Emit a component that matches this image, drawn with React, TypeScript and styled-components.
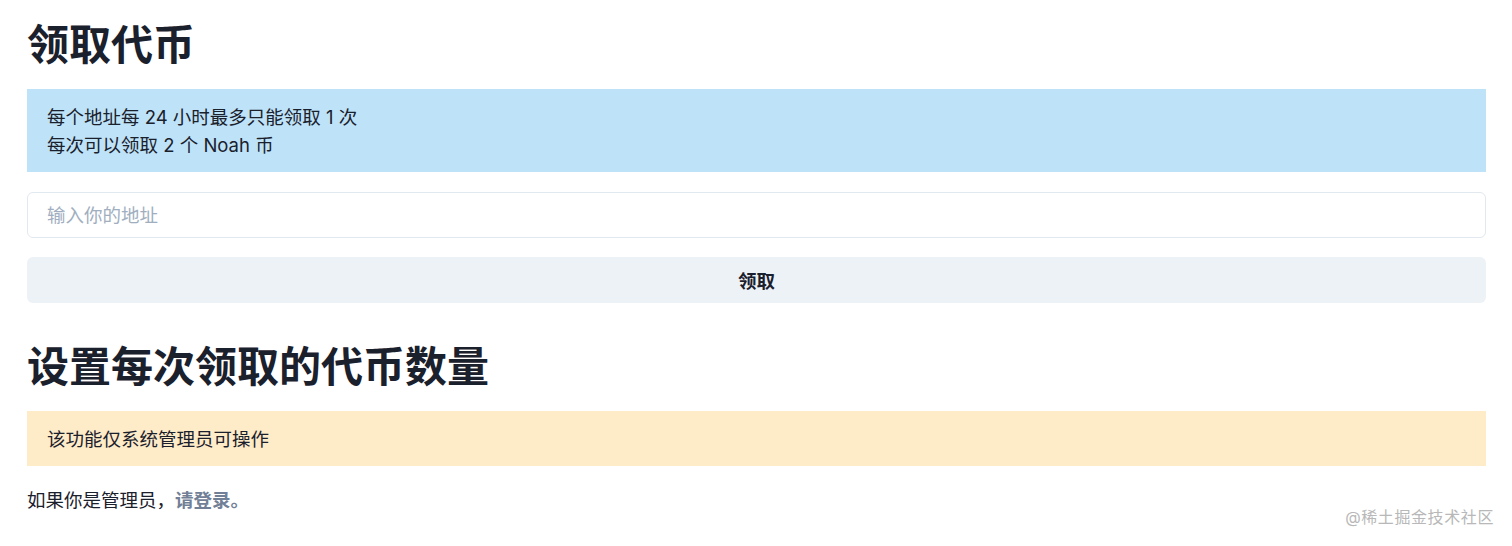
import React from "react";
import styled, { createGlobalStyle } from "styled-components";

const GlobalStyle = createGlobalStyle`
  * {
    box-sizing: border-box;
  }
  body {
    margin: 0;
    background: #ffffff;
    color: #1a202c;
    font-family: Inter, "Noto Sans CJK SC", sans-serif;
  }
`;

const Page = styled.div`
  position: relative;
  min-height: 546px;
  padding: 20px 26px 0 27px;
  display: flex;
  flex-direction: column;
`;

const Heading = styled.h2<{ $gapTop?: number }>`
  margin: ${(p) => p.$gapTop ?? 0}px 0 19px;
  font-size: 42px;
  line-height: 50px;
  font-weight: 700;
  color: #1a202c;
`;

const Alert = styled.div<{ $tone: "info" | "warning" }>`
  background-color: ${(p) => (p.$tone === "info" ? "#bee3f8" : "#feebc8")};
  padding: 14px 20px 13px;
  font-size: 18.5px;
  line-height: 28px;
  color: #1a202c;
  margin-bottom: 20px;
`;

const Form = styled.form`
  display: flex;
  flex-direction: column;
  gap: 19px;
`;

const AddressInput = styled.input`
  height: 46px;
  width: 100%;
  padding: 0 19px;
  border: 1px solid #e2e8f0;
  border-radius: 6px;
  font-family: inherit;
  font-size: 18.5px;
  color: #1a202c;
  outline: none;
  &::placeholder {
    color: #a0aec0;
  }
`;

const ClaimButton = styled.button`
  height: 46px;
  width: 100%;
  border: none;
  border-radius: 6px;
  background-color: #edf2f7;
  font-family: inherit;
  font-size: 18.5px;
  font-weight: 700;
  color: #1a202c;
  cursor: pointer;
`;

const Note = styled.p`
  margin: 0;
  font-size: 18.5px;
  line-height: 28px;
`;

const LoginLink = styled.a`
  color: #718096;
  font-weight: 700;
  text-decoration: none;
`;

const Watermark = styled.span`
  position: absolute;
  right: 18px;
  bottom: 18px;
  font-size: 16px;
  color: #b8b8b8;
  letter-spacing: 0.6px;
`;

export default function App() {
  return (
    <>
      <GlobalStyle />
      <Page>
        <Heading>领取代币</Heading>
        <Alert $tone="info">
          每个地址每 24 小时最多只能领取 1 次
          <br />
          每次可以领取 2 个 Noah 币
        </Alert>
        <Form onSubmit={(e) => e.preventDefault()}>
          <AddressInput placeholder="输入你的地址" />
          <ClaimButton type="submit">领取</ClaimButton>
        </Form>
        <Heading $gapTop={39}>设置每次领取的代币数量</Heading>
        <Alert $tone="warning">该功能仅系统管理员可操作</Alert>
        <Note>
          如果你是管理员，<LoginLink href="#">请登录。</LoginLink>
        </Note>
        <Watermark>@稀土掘金技术社区</Watermark>
      </Page>
    </>
  );
}
